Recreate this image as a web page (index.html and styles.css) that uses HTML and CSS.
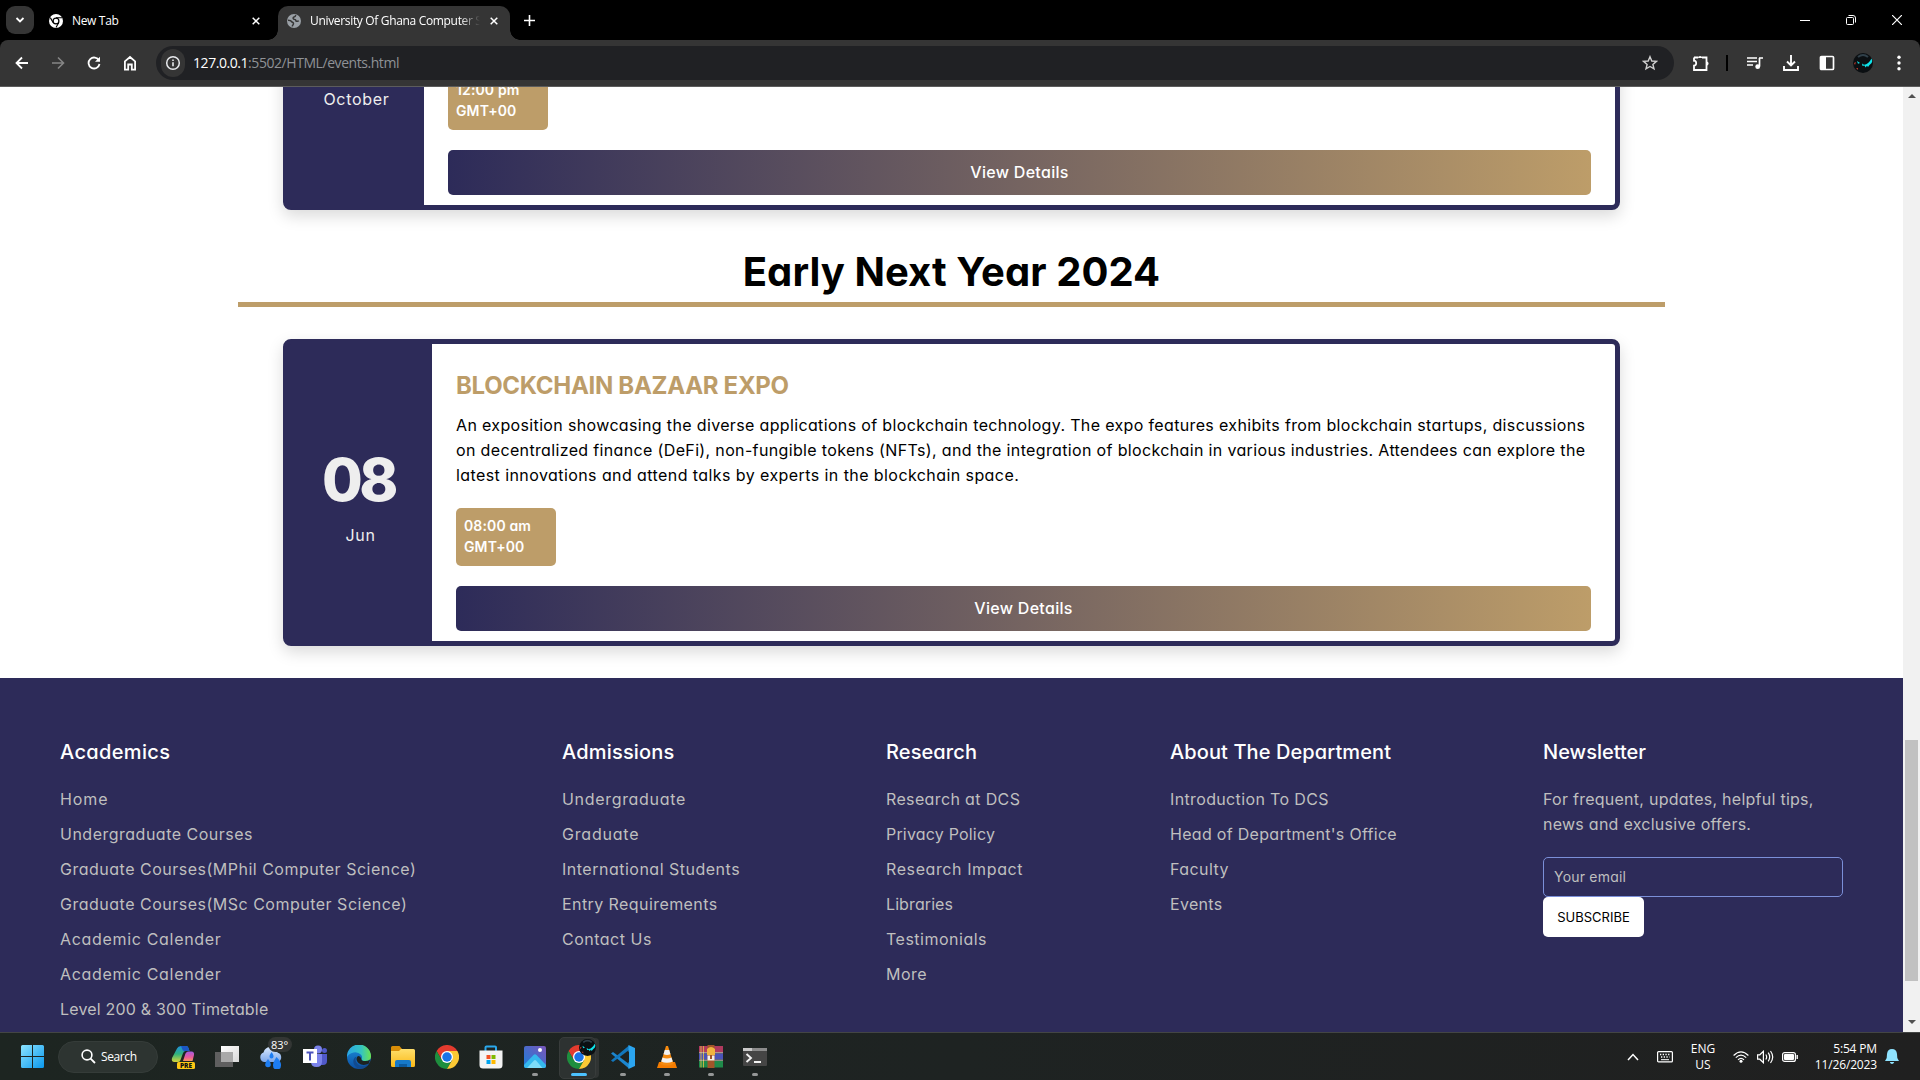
FILE: index.html
```html
<!DOCTYPE html>
<html lang="en">
<head>
<meta charset="utf-8">
<title>University Of Ghana Computer Science</title>
<link rel="stylesheet" href="styles.css">
</head>
<body>
<svg class="defs" width="0" height="0">
  <defs>
    <linearGradient id="win" x1="0" y1="0" x2="1" y2="1"><stop offset="0" stop-color="#8ce4ff"/><stop offset="1" stop-color="#0a98ee"/></linearGradient>
    <linearGradient id="copA" x1="0" y1="0" x2="0" y2="1"><stop offset="0" stop-color="#1f8fe0"/><stop offset=".5" stop-color="#2fb27c"/><stop offset="1" stop-color="#d6d53a"/></linearGradient>
    <linearGradient id="copB" x1="0" y1="0" x2="0" y2="1"><stop offset="0" stop-color="#a35be0"/><stop offset=".6" stop-color="#ea5a9a"/><stop offset="1" stop-color="#f79a5c"/></linearGradient>
    <linearGradient id="edgeA" x1="0" y1="0" x2="1" y2="0"><stop offset="0" stop-color="#2aa6e6"/><stop offset=".6" stop-color="#35c4c0"/><stop offset="1" stop-color="#6be34f"/></linearGradient>
    <linearGradient id="edgeB" x1="0" y1="0" x2="0" y2="1"><stop offset="0" stop-color="#1b8fdc"/><stop offset="1" stop-color="#0c4fa3"/></linearGradient>
    <linearGradient id="fold" x1="0" y1="0" x2="0" y2="1"><stop offset="0" stop-color="#ffdf6b"/><stop offset="1" stop-color="#fbb917"/></linearGradient>
    <linearGradient id="photo" x1="0" y1="1" x2="1" y2="0"><stop offset="0" stop-color="#1a7fdc"/><stop offset="1" stop-color="#7a55b8"/></linearGradient>
    <linearGradient id="grayA" x1="0" y1="0" x2="1" y2="1"><stop offset="0" stop-color="#ffffff"/><stop offset="1" stop-color="#d8d8d8"/></linearGradient>
    <linearGradient id="cloud" x1="0" y1="0" x2="0" y2="1"><stop offset="0" stop-color="#d9e9ff"/><stop offset="1" stop-color="#7ba6ea"/></linearGradient>
    <symbol id="chrome" viewBox="0 0 48 48">
      <path fill="#e33b2e" d="M24 24 3.2 12a24 24 0 0 1 41.6 0z"/>
      <path fill="#e33b2e" d="M3.200 12 13.600 30 24 24V12z"/>
      <path fill="#1e8e3e" d="M3.200 12 13.600 30l10.400 6 10.400-6L24 48A24 24 0 0 1 3.200 12z"/>
      <path fill="#fcc934" d="M24 12h20.800A24 24 0 0 1 24 48l10.400-18z"/>
      <circle cx="24" cy="24" r="12" fill="#fff"/><circle cx="24" cy="24" r="9.500" fill="#1a73e8"/>
    </symbol>
    <symbol id="avatar" viewBox="0 0 20 20">
      <circle cx="10" cy="10" r="10" fill="#0b0f12"/>
      <path d="M5 4q5-4 10 0" stroke="#30404a" stroke-width="2" fill="none"/>
      <path d="M9 10.500l2 1.200q4.500-.2 7.500-6.200Q20.500 10 16.500 12l-1.500 2-1-1.300-1.500 1.800-1-2-2 .5zM4 8l3 2-2 .8z" fill="#0fe3ea"/>
      <path d="M1 10l2-1-1 3zM3 15h2v2z" fill="#b5382c"/>
    </symbol>
  </defs>
</svg>

<header class="tabs">
  <button class="tab-search"><svg width="10" height="10" viewBox="0 0 10 10"><path d="M1.500 3 5 6.500 8.500 3" fill="none" stroke="#fff" stroke-width="1.800"/></svg></button>
  <div class="tab">
    <svg width="14" height="14" viewBox="0 0 14 14"><circle cx="7" cy="7" r="7" fill="#fff"/><circle cx="7" cy="7" r="2.900" fill="#fff" stroke="#000" stroke-width="1.200"/><path d="M7 3.800h6M4.200 8.600 1.300 3.600M9.800 8.600 7 13.500" stroke="#000" stroke-width="1.100"/></svg>
    <span class="tab-title">New Tab</span>
    <svg width="8" height="8" viewBox="0 0 8 8"><path d="M.7.7l6.600 6.600M7.300.7.7 7.300" stroke="#fff" stroke-width="1.500"/></svg>
  </div>
  <div class="tab active">
    <svg width="14" height="14" viewBox="0 0 14 14"><circle cx="7" cy="7" r="7" fill="#9aa0a6"/><path d="M8.800 1.200Q8.500 3 6.500 3.200 5.500 4.500 7 5.200q2 .2 2 1.800 1.500.8 2.800-.3M1 6.300q3 0 4 1.700 2 .5 1.300 2.300Q5.300 11 5.300 12.600" fill="none" stroke="#353535" stroke-width="1.500"/></svg>
    <span class="tab-title fade">University Of Ghana Computer Science</span>
    <svg width="8" height="8" viewBox="0 0 8 8"><path d="M.7.7l6.600 6.600M7.300.7.7 7.300" stroke="#fff" stroke-width="1.500"/></svg>
  </div>
  <svg class="plus" width="11" height="11" viewBox="0 0 11 11"><path d="M5.500 0v11M0 5.500h11" stroke="#fff" stroke-width="1.600"/></svg>
  <div class="window-buttons">
    <span><svg width="10" height="10" viewBox="0 0 10 10"><path d="M0 5.500h10" stroke="#fff"/></svg></span>
    <span><svg width="10" height="10" viewBox="0 0 10 10"><rect x=".5" y="2.500" width="7" height="7" rx="1" fill="none" stroke="#fff"/><path d="M2.500.5H7A2.500 2.500 0 0 1 9.500 3v4.500" fill="none" stroke="#fff"/></svg></span>
    <span><svg width="10" height="10" viewBox="0 0 10 10"><path d="M0 0l10 10M10 0 0 10" stroke="#fff" stroke-width="1.200"/></svg></span>
  </div>
</header>

<nav class="toolbar">
  <div class="nav-buttons">
    <span><svg width="14" height="14" viewBox="0 0 14 14"><path d="M13 7H2M7 1.500 1.500 7 7 12.500" fill="none" stroke="#fff" stroke-width="1.800"/></svg></span>
    <span><svg width="14" height="14" viewBox="0 0 14 14"><path d="M1 7h11M7 1.500 12.500 7 7 12.500" fill="none" stroke="#858585" stroke-width="1.600"/></svg></span>
    <span><svg width="14" height="14" viewBox="0 0 14 14"><path d="M12 4.500A5.500 5.500 0 1 0 12.500 8" fill="none" stroke="#fff" stroke-width="1.800"/><path d="M13 .8v5H8z" fill="#fff"/></svg></span>
    <span><svg width="14" height="16" viewBox="0 0 14 16"><path d="M1.900 14.600V6.300L7 2l5.100 4.300v8.300H8.800V9.500H5.200v5.100z" fill="none" stroke="#fff" stroke-width="1.800"/></svg></span>
  </div>
  <div class="omnibox">
    <span class="info"><svg width="16" height="16" viewBox="0 0 16 16"><circle cx="8" cy="8" r="6.300" fill="none" stroke="#e8eaed" stroke-width="1.500"/><path d="M8 7.200v4M8 4.500v1.500" stroke="#e8eaed" stroke-width="1.600"/></svg></span>
    <span class="url"><b>127.0.0.1</b>:5502/HTML/events.html</span>
    <svg class="star" width="16" height="16" viewBox="0 0 16 16"><path d="M8 1.700 9.800 6l4.600.4-3.500 3 1.100 4.500L8 11.500 4 13.900l1.100-4.500-3.500-3L6.200 6z" fill="none" stroke="#d0d0d0" stroke-width="1.400"/></svg>
  </div>
  <div class="tools">
    <span><svg width="18" height="18" viewBox="0 0 18 18"><path d="M2 3.500h4.200M2 3.500v3.200c2.900-.2 2.900 5.100 0 4.900V16h12.500V3.500H10" fill="none" stroke="#fff" stroke-width="1.800"/><path d="M6 4a2.100 2.100 0 0 1 4.200 0zM14.500 7.500a2.100 2.100 0 0 1 0 4.200z" fill="#fff"/></svg></span>
    <i class="sep"></i>
    <span><svg width="16" height="14" viewBox="0 0 16 14"><path d="M0 2h10M0 5.500h10M0 9h6" stroke="#fff" stroke-width="1.600"/><path d="M12.500 2v8.500M12 2h4" stroke="#fff" stroke-width="1.700"/><circle cx="10.700" cy="10.700" r="2.400" fill="#fff"/></svg></span>
    <span><svg width="16" height="16" viewBox="0 0 16 16"><path d="M8 0v10M4 6.500l4 4 4-4M1 11v4h14v-4" fill="none" stroke="#fff" stroke-width="1.900"/></svg></span>
    <span><svg width="16" height="16" viewBox="0 0 16 16"><rect x="1.500" y="1.500" width="13" height="13" rx="1" fill="none" stroke="#fff" stroke-width="1.700"/><path d="M1.500 1.500h5.500v13H1.500z" fill="#fff"/></svg></span>
    <span><svg width="20" height="20"><use href="#avatar"/></svg></span>
    <span><svg width="4" height="16" viewBox="0 0 4 16"><g fill="#fff"><circle cx="2" cy="2.200" r="1.700"/><circle cx="2" cy="8" r="1.700"/><circle cx="2" cy="13.800" r="1.700"/></g></svg></span>
  </div>
</nav>

<div class="viewport">
  <div class="page">
    <main class="events">
      <article class="event event-october">
        <div class="event-date"><span class="day"></span><span class="month">October</span></div>
        <div class="event-body">
          <div class="time"><span>12:00 pm</span><span>GMT+00</span></div>
          <a class="details">View Details</a>
        </div>
      </article>
      <h1 class="season">Early Next Year 2024</h1>
      <article class="event">
        <div class="event-date"><span class="day">08</span><span class="month">Jun</span></div>
        <div class="event-body">
          <h2 class="event-title">BLOCKCHAIN BAZAAR EXPO</h2>
          <p class="event-text">An exposition showcasing the diverse applications of blockchain technology. The expo features exhibits from blockchain startups, discussions<br>on decentralized finance (DeFi), non-fungible tokens (NFTs), and the integration of blockchain in various industries. Attendees can explore the<br><span class="track-41">latest innovations and attend talks by experts in the blockchain space.</span></p>
          <div class="time"><span>08:00 am</span><span>GMT+00</span></div>
          <a class="details">View Details</a>
        </div>
      </article>
    </main>
    <footer class="footer">
      <section>
        <h3 class="track-34">Academics</h3>
        <ul>
          <li class="track-100">Home</li>
          <li class="track-50">Undergraduate Courses</li>
          <li class="track-50">Graduate Courses(MPhil Computer Science)</li>
          <li class="track-50">Graduate Courses(MSc Computer Science)</li>
          <li class="track-68">Academic Calender</li>
          <li class="track-68">Academic Calender</li>
          <li class="track-20">Level 200 &amp; 300 Timetable</li>
        </ul>
      </section>
      <section>
        <h3 class="track-20">Admissions</h3>
        <ul>
          <li class="track-68">Undergraduate</li>
          <li class="track-80">Graduate</li>
          <li class="track-50">International Students</li>
          <li class="track-41">Entry Requirements</li>
          <li class="track-50">Contact Us</li>
        </ul>
      </section>
      <section>
        <h3 class="track-10">Research</h3>
        <ul>
          <li class="track-34">Research at DCS</li>
          <li class="track-20">Privacy Policy</li>
          <li class="track-60">Research Impact</li>
          <li class="track-10">Libraries</li>
          <li class="track-50">Testimonials</li>
          <li class="track-50">More</li>
        </ul>
      </section>
      <section>
        <h3 class="track-10">About The Department</h3>
        <ul>
          <li class="track-34">Introduction To DCS</li>
          <li class="track-28">Head of Department's Office</li>
          <li class="track-41">Faculty</li>
          <li class="track-28">Events</li>
        </ul>
      </section>
      <section>
        <h3>Newsletter</h3>
        <p class="track-25">For frequent, updates, helpful tips,<br>news and exclusive offers.</p>
        <div class="email">Your email</div>
        <button class="subscribe">SUBSCRIBE</button>
      </section>
    </footer>
  </div>
  <aside class="scrollbar">
    <svg width="8" height="4" viewBox="0 0 8 4"><path d="M0 4 4 0l4 4z" fill="#505050"/></svg>
    <div class="thumb"></div>
    <svg width="8" height="4" viewBox="0 0 8 4"><path d="M0 0l4 4 4-4z" fill="#505050"/></svg>
  </aside>
</div>

<div class="taskbar">
  <span class="start"><svg width="24" height="24" viewBox="0 0 24 24"><path fill="url(#win)" d="M0 1.500Q0 0 1.500 0H11v11H0zM12 0h9.500Q23 0 23 1.500V11H12zM0 12h11v11H1.500Q0 23 0 21.500zM12 12h11v9.500q0 1.500-1.500 1.500H12z"/></svg></span>
  <div class="search"><svg width="15" height="15" viewBox="0 0 15 15"><circle cx="6" cy="6" r="4.900" fill="none" stroke="#fff" stroke-width="1.600"/><path d="M9.600 9.600 14 14" stroke="#fff" stroke-width="1.800"/></svg><span class="search-text">Search</span></div>
  <div class="apps">
    <span class="app"><svg width="24" height="24" viewBox="0 0 24 24"><path d="M6 3.500Q7 1 10 1h5q2 0 2.500 2l1 3h-4q-2 0-2.800 3L9.500 15Q9 17 7 17H3.500Q0 17 1 13z" fill="url(#copA)"/><path d="M10 1h5q2 0 2.500 2l1 3h-5Q11.500 6 11 3.500z" fill="#1b56c4"/><path d="M14 10q.8-3.500 3.500-3.500h3Q23.500 6.500 23 10l-1.500 6H12z" fill="url(#copB)"/></svg><em class="pre">PRE</em></span>
    <span class="app"><svg width="24" height="24" viewBox="0 0 24 24"><rect x="0" y="7" width="18" height="15" fill="#5f5f5f"/><rect x="6" y="1" width="18" height="16" fill="url(#grayA)"/><rect x="6" y="7" width="12" height="10" fill="#a9a9a9"/></svg></span>
    <span class="app"><svg width="24" height="24" viewBox="0 0 24 24"><path d="M5 17a5 5 0 0 1-.5-9.500Q6 2 11.500 2 17 2 18.500 7.500A5 5 0 0 1 19 17z" fill="url(#cloud)"/><path d="M9 14q3 3.500 2.800 5.500a2.800 2.800 0 0 1-5.600 0Q6 17.500 9 14zM17.500 12q5 5 4.500 8.500a4 4 0 0 1-8 0q0-3.500 3.500-8.500zM12.500 7q2.500 3 2 4.500a2 2 0 0 1-4 0q0-1.500 2-4.500z" fill="#1d7df2"/></svg><em class="temp">83°</em></span>
    <span class="app"><svg width="24" height="24" viewBox="0 0 24 24"><circle cx="15" cy="4.500" r="4" fill="#7b83eb"/><circle cx="21.500" cy="5.500" r="2.500" fill="#5059c9"/><path d="M16 9h8v7q0 4-4 4h-2z" fill="#5059c9"/><path d="M9 9h10v7.500q0 5.500-5.500 5.500T8 17z" fill="#7b83eb"/><rect x="0" y="4" width="14" height="14" fill="#fff"/><path d="M3.500 7.500h7M7 7.500v8" stroke="#4b53bc" stroke-width="2"/></svg></span>
    <span class="app"><svg width="24" height="24" viewBox="0 0 24 24"><circle cx="12" cy="12" r="12" fill="url(#edgeB)"/><path d="M0 12A12 12 0 0 1 24 11q.3 5-5.500 5-4.500 0-4-2 1.300-2-.5-4.200Q11 6.500 6.500 7.500 1.500 8.700 0 12z" fill="url(#edgeA)"/><path d="M9.500 11.500Q7 16 11 19.500q5 3.500 11-1Q18 25 11 23.500 5.500 20 6.500 15q.7-3 3-3.500z" fill="#124a8f"/><path d="M14.500 14q-.5 2 4 2 3 0 4.500-1.500l-1 4q-6 3-10.500-.5Q8.500 15 10 12q2.500-2.500 4.500 2z" fill="#1d2322"/></svg></span>
    <span class="app"><svg width="24" height="24" viewBox="0 0 24 24"><path d="M0 2.500Q0 1 1.500 1h7L11 4h-1v4H0z" fill="#d88d08"/><path d="M0 6h8l2-2h12.500Q24 4 24 5.500v15q0 1.500-1.500 1.500h-21Q0 22 0 20.500z" fill="url(#fold)"/><path d="M4 17q0-2 2-2h12q2 0 2 2v5H4z" fill="#1679c9"/><path d="M8 19h8v3H8z" fill="#0c5a9e"/></svg></span>
    <span class="app"><svg width="24" height="24"><use href="#chrome"/></svg></span>
    <span class="app"><svg width="24" height="24" viewBox="0 0 24 24"><path d="M6.500 6V2.500Q6.500 1.500 7.500 1.500h8.500q1 0 1 1V6" fill="none" stroke="#2aa8ec" stroke-width="2"/><path d="M.5 5.500h23V20q0 3.500-3.500 3.500H4Q.5 23.500.5 20z" fill="#f3f3f3"/><path d="M7.500 10h4v4h-4z" fill="#f25022"/><path d="M12.500 10h4v4h-4z" fill="#7fba00"/><path d="M7.500 15h4v4h-4z" fill="#00a4ef"/><path d="M12.500 15h4v4h-4z" fill="#ffb900"/></svg></span>
    <span class="app run"><svg width="24" height="24" viewBox="0 0 24 24"><rect x="1" y="1" width="22" height="22" rx="2" fill="url(#photo)"/><path d="M1 20 10.500 10q1.500-1.500 3 0L23 20v1q0 2-2 2H3q-2 0-2-2z" fill="#35b9ee"/><path d="M4 23 11 15.500q1-1 2 0L19.500 23z" fill="#7ddcf8"/><circle cx="17" cy="5" r="2" fill="#fff"/></svg></span>
    <span class="app on"><svg width="24" height="24"><use href="#chrome"/></svg><svg class="badge" width="17" height="17"><use href="#avatar"/></svg></span>
    <span class="app run"><svg width="24" height="24" viewBox="0 0 24 24"><path d="M0 8.500 2 7l16 12v4.500z" fill="#1c86cf"/><path d="M0 15.500 2 17 18 5V.5z" fill="#1277bd"/><path d="M17.500 0 24 3v18l-6.500 3z" fill="#2ba5f0"/><path d="M18 6.500v11L10.500 12z" fill="#1d2322"/></svg></span>
    <span class="app run"><svg width="24" height="24" viewBox="0 0 24 24"><path d="M4 17h16l2 6H2z" fill="#f57c00"/><path d="M11 1h2l5.500 18q-6.500 3-13 0z" fill="#f58a10"/><path d="M9.800 5h4.400l1.300 4.200q-3.500 1.500-7 0zM7.500 12.500q4.500 2 9 0l1.300 4q-6 2.500-11.600 0z" fill="#f2f2f2"/></svg></span>
    <span class="app run"><svg width="24" height="24" viewBox="0 0 24 24"><path d="M0 1h24v6.500H0z" fill="#b03a5e"/><path d="M0 8.500h24v6H0z" fill="#4a53b8"/><path d="M0 16h24v6.500H0z" fill="#1f8a4a"/><path d="M2 1v21.500M4.500 1v21.500" stroke="#d8b545" stroke-width=".9"/><path d="M0 7.800h24M0 15.200h24" stroke="#e9e3d2" stroke-width=".8"/><path d="M8.500 0h7v23h-7z" fill="#a1552a"/><path d="M8 4q4-4 8 0v6H8z" fill="#f0b440"/><path d="M8.500 10.500h7v5h-7z" fill="#f5f0e6"/><path d="M11 10h2v4h-2z" fill="#a1552a"/></svg></span>
    <span class="app run"><svg width="24" height="24" viewBox="0 0 24 24"><rect x="0" y="3" width="24" height="18" rx="1" fill="#454545"/><path d="M0 3h24v3H0z" fill="#8c8c8c"/><path d="M0 3h9v3H0z" fill="#c9c9c9"/><path d="M3.500 9 8 13l-4.500 4M11 17h7" fill="none" stroke="#f2f2f2" stroke-width="1.900"/></svg></span>
  </div>
  <div class="tray">
    <svg class="chev" width="12" height="8" viewBox="0 0 12 8"><path d="M1 7 6 1.500 11 7" fill="none" stroke="#fff" stroke-width="1.500"/></svg>
    <svg class="kbd" width="16" height="12" viewBox="0 0 16 12"><rect x=".6" y=".6" width="14.800" height="10.300" rx="1" fill="none" stroke="#fff" stroke-width="1.200"/><path d="M3 3.500h10.500M4 6h8.500" stroke="#fff" stroke-width="1.300" stroke-dasharray="1.300 1.400"/><path d="M4 8.700h8" stroke="#fff"/></svg>
    <div class="lang"><span>ENG</span><span>US</span></div>
    <svg class="wifi" width="16" height="12" viewBox="0 0 16 12"><g fill="none" stroke="#fff" stroke-width="1.200"><path d="M.6 4.500q7.400-7.400 14.800 0"/><path d="M2.800 6.700q5.200-5.200 10.400 0"/><path d="M5 8.900q3-3 6 0"/></g><circle cx="8" cy="10.300" r="1.500" fill="#fff"/></svg>
    <svg class="vol" width="17" height="14" viewBox="0 0 17 14"><g fill="none" stroke="#fff" stroke-width="1.200"><path d="M.6 4.800h2.200L6.400 1.300v11.400L2.800 9.200H.6z"/><path d="M8.800 4.500q1.700 2.500 0 5M11.200 2.700q3 4.300 0 8.600M13.500 1q4.400 6 0 12"/></g></svg>
    <svg class="bat" width="16" height="10" viewBox="0 0 16 10"><rect x=".6" y=".6" width="12.800" height="8.800" rx="2" fill="none" stroke="#fff" stroke-width="1.200"/><rect x="2" y="2" width="10" height="6" rx="1" fill="#fff"/><path d="M15.200 3v4" stroke="#fff" stroke-width="1.400"/></svg>
    <div class="clock"><span>5:54 PM</span><span>11/26/2023</span></div>
    <svg width="14" height="15" viewBox="0 0 14 15"><path d="M7 0q4.500 0 5 5l.3 4L14 12H0l1.700-3L2 5q.5-5 5-5zM4.800 13h4.400Q8.500 15 7 15t-2.200-2z" fill="#8fe3ff"/></svg>
  </div>
</div>
</body>
</html>
```

FILE: styles.css
```css
* { box-sizing: border-box; }
body { margin: 0; width: 1920px; height: 1080px; overflow: hidden; display: flex; flex-direction: column; font-family: Inter, "Open Sans", sans-serif; font-feature-settings: "cv11"; font-size: 16px; background: #fff; color: #000; }
.defs { display: block; position: absolute; }
svg { display: block; flex: none; }
h1, h2, h3, p, ul { margin: 0; padding: 0; }
button { border: 0; padding: 0; font: inherit; }

.track-10 { letter-spacing: .1px; }
.track-20 { letter-spacing: .19px; }
.track-25 { letter-spacing: .26px; }
.track-28 { letter-spacing: .3px; }
.track-34 { letter-spacing: .36px; }
.track-41 { letter-spacing: .42px; }
.track-50 { letter-spacing: .5px; }
.track-60 { letter-spacing: .6px; }
.track-68 { letter-spacing: .68px; }
.track-80 { letter-spacing: .8px; }
.track-100 { letter-spacing: .9px; }

/* Browser chrome */
.tabs, .toolbar, .taskbar { font-family: "Open Sans", "Noto Sans", sans-serif; color: #fff; }
.tabs { flex: none; height: 40px; background: #000; display: flex; align-items: flex-end; padding-left: 6px; }
.tab-search { width: 28px; height: 28px; margin-bottom: 6px; border-radius: 9px; background: #353535; display: grid; place-items: center; }
.tab { height: 34px; display: flex; align-items: center; width: 229px; padding: 0 3px 5px 15px; margin-right: 15px; }
.tab.active { position: relative; width: 232px; margin: 0; padding: 0 12px 5px 9px; background: #353535; border-radius: 10px 10px 0 0; }
.tab.active::before, .tab.active::after { content: ""; position: absolute; bottom: 0; width: 10px; height: 10px; }
.tab.active::before { left: -10px; background: radial-gradient(circle at 0 0, #000 9.500px, #353535 10px); }
.tab.active::after { right: -10px; background: radial-gradient(circle at 100% 0, #000 9.500px, #353535 10px); }
.tab-title { font-size: 12px; line-height: 16px; margin-left: 9px; letter-spacing: -.33px; white-space: nowrap; overflow: hidden; flex: 1; }
.fade { margin-right: 10px; -webkit-mask-image: linear-gradient(90deg, #000 150px, transparent 170px); mask-image: linear-gradient(90deg, #000 150px, transparent 170px); }
.plus { margin: 0 0 14px 14px; }
.window-buttons { margin-left: auto; display: flex; height: 40px; }
.window-buttons span { width: 46px; display: grid; place-items: center; }
.toolbar { flex: none; height: 47px; background: #353535; border-bottom: 1px solid #5c5c5c; display: flex; align-items: center; padding-left: 4px; border-radius: 8px 8px 0 0; box-shadow: 0 -10px 0 10px #000; clip-path: inset(0); }
.nav-buttons, .tools { display: flex; align-items: center; }
.nav-buttons span, .tools span { width: 36px; height: 36px; display: grid; place-items: center; }
.omnibox { width: 1518px; height: 34px; margin-left: 8px; border-radius: 17px; background: #202124; display: flex; align-items: center; padding: 0 16px 0 5px; }
.info { width: 24px; height: 28px; border-radius: 12px; background: #353535; display: grid; place-items: center; }
.url { margin-left: 8px; font-size: 14px; line-height: 20px; letter-spacing: -.44px; color: #8f9296; white-space: nowrap; }
.url b { font-weight: 400; color: #fff; }
.star { margin-left: auto; }
.tools { margin-left: 9px; }
.tools .sep { width: 2px; height: 16px; margin: 0 9px 0 7px; background: #000; }

/* Page */
.viewport { flex: 1; min-height: 0; display: flex; overflow: hidden; }
.page { width: 1903px; overflow: hidden; }
.events { width: 1427px; margin: -184px auto 0; padding-bottom: 32px; }
.event { width: 1337px; height: 307px; margin: 0 auto; border: 5px solid #2d2b59; border-radius: 8px; background: #2d2b59; display: flex; box-shadow: 0 6px 16px rgba(0, 0, 0, .15); }
.event-date { width: 144px; display: flex; flex-direction: column; align-items: center; padding-top: 94px; color: #eee; }
.event-october .event-date { width: 136px; }
.day { height: 85px; line-height: 83px; font-size: 59px; font-weight: 800; letter-spacing: -3.500px; margin-right: 3px; }
.month { line-height: 24px; letter-spacing: .7px; padding-left: 1px; }
.event-body { flex: 1; background: #fff; border-radius: 0 3px 3px 0; padding: 24px 24px 10px; display: flex; flex-direction: column; justify-content: flex-end; align-items: flex-start; }
.event-title { font-size: 24px; line-height: 36px; font-weight: 700; color: #bd9d69; margin-bottom: 9px; letter-spacing: -.3px; white-space: nowrap; }
.event-text { line-height: 25px; letter-spacing: .35px; white-space: nowrap; margin-bottom: 20px; }
.time { width: 100px; height: 58px; border-radius: 5px; background: #bd9d69; color: #fff; font-size: 14px; font-weight: 600; line-height: 21px; letter-spacing: .13px; padding: 7px 8px; display: flex; flex-direction: column; align-items: flex-start; white-space: nowrap; }
.details { width: 100%; height: 45px; margin-top: 20px; border-radius: 5px; background: linear-gradient(90deg, #2d2b59, #bd9d69); color: #fff; font-weight: 500; line-height: 45px; letter-spacing: .3px; text-align: center; }
.season { font-size: 40px; line-height: 60px; letter-spacing: .07px; margin: 32px 0; font-weight: 700; text-align: center; border-bottom: 5px solid #bd9d69; }

.footer { height: 360px; background: #2d2b59; color: #bfbfbf; padding: 59px 60px 0; display: grid; grid-template-columns: 502px 324px 284px 373px 300px; }
.footer h3 { font-size: 20px; line-height: 31px; font-weight: 450; color: #fff; margin-bottom: 19px; white-space: nowrap; }
.footer ul { list-style: none; display: grid; gap: 10px; }
.footer li, .footer p { line-height: 25px; white-space: nowrap; }
.email { width: 300px; height: 40px; margin-top: 20px; border: 1px solid #7b8fd8; border-radius: 5px; padding-left: 10px; font-size: 14px; line-height: 37px; letter-spacing: .2px; }
.subscribe { display: block; width: 101px; height: 40px; border-radius: 5px; background: #fff; color: #000; font-size: 13px; line-height: 38px; }
.scrollbar { width: 17px; background: #f1f1f1; display: flex; flex-direction: column; align-items: center; justify-content: space-between; padding: 7px 0 8px; }
.thumb { width: 13px; height: 241px; background: #c1c1c1; margin: 603px 0 0; }

/* Taskbar */
.taskbar { flex: none; height: 48px; background: linear-gradient(90deg, #1d2521, #1e2322 50%, #202020); border-top: 1px solid #434544; display: flex; align-items: center; }
.start { margin-left: 21px; width: 37px; }
.search { width: 100px; height: 32px; border-radius: 16px; background: #2d3431; border: 1px solid #353c39; display: flex; align-items: center; padding-left: 22px; font-size: 12px; letter-spacing: -.38px; }
.search-text { margin-left: 5px; }
.apps { display: flex; margin-left: 3px; }
.app { position: relative; width: 44px; height: 40px; display: grid; place-items: center; }
.app em { position: absolute; font-style: normal; white-space: nowrap; }
.pre { left: 16px; bottom: 8px; width: 18px; height: 7px; border-radius: 1.500px; background: #ffc814; color: #111; font-size: 6.500px; font-weight: 800; line-height: 7px; text-align: center; }
.temp { left: 19px; top: 0; width: 24px; height: 15px; border-radius: 8px; background: #333634; font-size: 11px; line-height: 15px; padding-left: 3px; }
.run::after, .on::after { content: ""; position: absolute; bottom: 1px; width: 6px; height: 3px; border-radius: 2px; background: #959797; }
.on::after { width: 16px; background: #4cc2ff; }
.on::before { content: ""; position: absolute; left: 2px; top: 0; width: 35px; height: 40px; border-radius: 5px; background: #2d3231; border: 1px solid #383c3b; box-shadow: 4px 0 0 -1px #303433; }
.on svg { position: relative; }
.on .badge { position: absolute; left: 22px; top: 2px; }
.tray { margin-left: auto; display: flex; align-items: center; font-size: 12px; line-height: 16px; padding-right: 21px; }
.chev, .kbd { margin-right: 18px; }
.lang { width: 24px; display: flex; flex-direction: column; align-items: center; margin-right: 18px; }
.wifi, .vol { margin-right: 8px; }
.bat { margin-right: 17px; }
.clock { width: 62px; display: flex; flex-direction: column; align-items: flex-end; margin-right: 8px; letter-spacing: -.15px; white-space: nowrap; }
```
